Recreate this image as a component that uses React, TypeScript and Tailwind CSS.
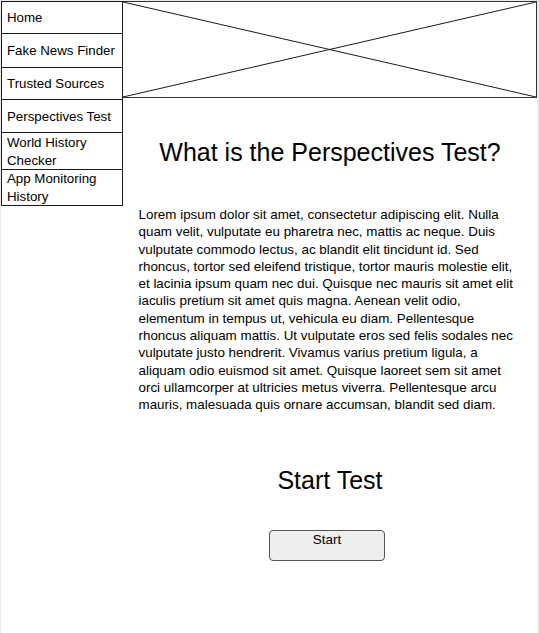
import React from "react";

const navItems = [
  { label: "Home", h: "h-[32px]" },
  { label: "Fake News Finder", h: "h-[34px]" },
  { label: "Trusted Sources", h: "h-[32px]" },
  { label: "Perspectives Test", h: "h-[33px]" },
  { label: "World History Checker", h: "h-[37px]" },
  { label: "App Monitoring History", h: "h-[36px]" },
];

const lorem =
  "Lorem ipsum dolor sit amet, consectetur adipiscing elit. Nulla quam velit, vulputate eu pharetra nec, mattis ac neque. Duis vulputate commodo lectus, ac blandit elit tincidunt id. Sed rhoncus, tortor sed eleifend tristique, tortor mauris molestie elit, et lacinia ipsum quam nec dui. Quisque nec mauris sit amet elit iaculis pretium sit amet quis magna. Aenean velit odio, elementum in tempus ut, vehicula eu diam. Pellentesque rhoncus aliquam mattis. Ut vulputate eros sed felis sodales nec vulputate justo hendrerit. Vivamus varius pretium ligula, a aliquam odio euismod sit amet. Quisque laoreet sem sit amet orci ullamcorper at ultricies metus viverra. Pellentesque arcu mauris, malesuada quis ornare accumsan, blandit sed diam.";

export default function App() {
  return (
    <div
      className="w-[539px] h-[633px] bg-[#ebebeb] pl-px pt-px pr-[2px] text-black"
      style={{ fontFamily: '"Liberation Sans", Arial, sans-serif' }}
    >
      <div className="flex h-full bg-white">
        {/* side nav */}
        <div className="w-[122px] shrink-0 self-start border-l border-r border-t border-[#1a1a1a]">
          {navItems.map((item) => (
            <div
              key={item.label}
              className={`${item.h} flex items-center border-b border-[#1a1a1a] px-[5px] pt-px text-[13.3px] leading-[18px]`}
            >
              {item.label}
            </div>
          ))}
        </div>

        {/* main */}
        <div className="flex-1 flex flex-col">
          <div className="h-[97px] border-t border-r border-b border-[#333]">
            <svg className="w-full h-full block" viewBox="0 0 100 100" preserveAspectRatio="none">
              <line x1="0" y1="0" x2="100" y2="100" stroke="#1a1a1a" strokeWidth="1" vectorEffect="non-scaling-stroke" />
              <line x1="0" y1="100" x2="100" y2="0" stroke="#1a1a1a" strokeWidth="1" vectorEffect="non-scaling-stroke" />
            </svg>
          </div>

          <h1 className="mt-[40px] text-center text-[25px] leading-[28px] font-normal">
            What is the Perspectives Test?
          </h1>

          <p className="mt-[40px] w-[383px] mx-auto text-[13.4px] leading-[17.3px]">{lorem}</p>

          <h2 className="mt-[52px] text-center text-[25px] leading-[28px] font-normal">Start Test</h2>

          <button className="mt-[36px] ml-[146px] w-[116px] h-[31px] bg-[#eeeeee] border border-[#555] rounded-[4px] text-[13.4px] leading-[16px] pt-[1px] flex justify-center items-start">
            Start
          </button>
        </div>
      </div>
    </div>
  );
}
